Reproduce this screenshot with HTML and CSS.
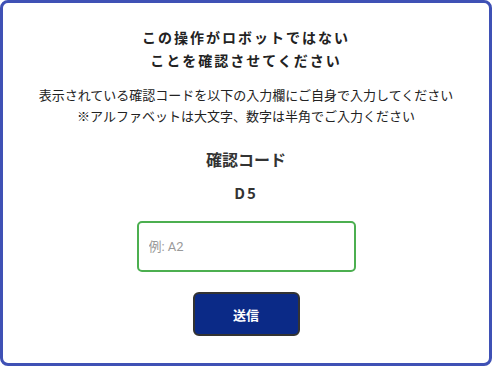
FILE: index.html
```html
<!DOCTYPE html>
<html lang="ja">
<head>
<meta charset="utf-8">
<link rel="stylesheet" href="styles.css">
</head>
<body>
<div class="card">
  <h1 class="title">この操作がロボットではない<br>ことを確認させてください</h1>
  <p class="desc">表示されている確認コードを以下の入力欄にご自身で入力してください<br>※アルファベットは大文字、数字は半角でご入力ください</p>
  <h2 class="label">確認コード</h2>
  <div class="code">D5</div>
  <input class="field" type="text" placeholder="例: A2">
  <button class="submit" type="button">送信</button>
</div>
</body>
</html>
```
FILE: styles.css
```css
html, body {
  margin: 0;
  padding: 0;
  background: #fff;
}
body {
  font-family: "Noto Sans CJK JP", "Noto Sans", sans-serif;
  color: #333;
}
.card {
  box-sizing: border-box;
  width: 492px;
  height: 366px;
  border: 3px solid #3f51b5;
  border-radius: 8px;
  display: flex;
  flex-direction: column;
  align-items: center;
  padding-top: 23px;
}
.title {
  margin: 0;
  font-size: 14px;
  font-weight: 700;
  letter-spacing: 2px;
  line-height: 23px;
  text-align: center;
  color: #222;
}
.desc {
  margin: 12px 0 0;
  font-size: 13px;
  line-height: 21px;
  text-align: center;
  color: #222;
}
.label {
  margin: 21px 0 0;
  font-size: 16px;
  font-weight: 700;
  line-height: 24px;
  color: #333;
}
.code {
  margin-top: 11px;
  font-size: 15px;
  font-weight: 700;
  letter-spacing: 2px;
  line-height: 22px;
  color: #333;
}
.field {
  box-sizing: border-box;
  margin-top: 17px;
  width: 219px;
  height: 51px;
  border: 2px solid #4caf50;
  border-radius: 5px;
  padding: 0 10px;
  font-family: Roboto, "Noto Sans CJK JP", sans-serif;
  font-size: 13px;
  outline: none;
}
.field::placeholder {
  color: #999;
}
.submit {
  box-sizing: border-box;
  margin-top: 20px;
  width: 107px;
  height: 44px;
  background: #0b2a87;
  border: 2px solid #333;
  border-radius: 6px;
  color: #fff;
  font-family: "Noto Sans CJK JP", sans-serif;
  font-size: 13px;
  font-weight: 700;
}
```
